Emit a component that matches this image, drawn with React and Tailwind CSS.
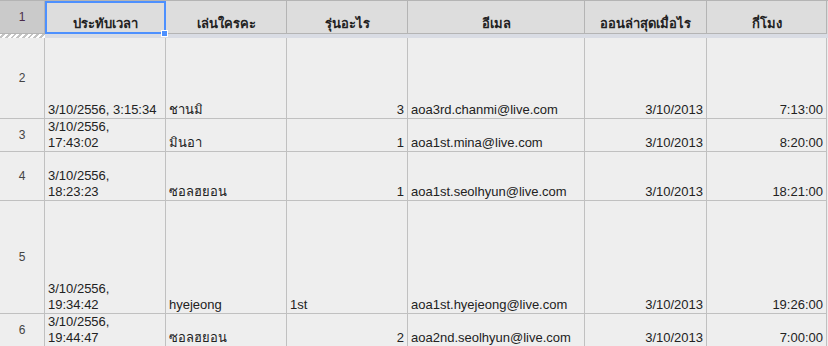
import React from "react";

const widths = ["w-[45px]", "w-[121px]", "w-[121px]", "w-[121px]", "w-[177px]", "w-[122px]", "w-[120px]"];
const headers = ["ประทับเวลา", "เล่นใครคะ", "รุ่นอะไร", "อีเมล", "ออนล่าสุดเมื่อไร", "กี่โมง"];

const rows = [
  { n: 2, h: "h-[81px]", cells: [["3/10/2556, 3:15:34"], "ชานมิ", "3", "aoa3rd.chanmi@live.com", "3/10/2013", "7:13:00"] },
  { n: 3, h: "h-[33px]", cells: [["3/10/2556,", "17:43:02"], "มินอา", "1", "aoa1st.mina@live.com", "3/10/2013", "8:20:00"] },
  { n: 4, h: "h-[49px]", cells: [["3/10/2556,", "18:23:23"], "ซอลฮยอน", "1", "aoa1st.seolhyun@live.com", "3/10/2013", "18:21:00"] },
  { n: 5, h: "h-[113px]", cells: [["3/10/2556,", "19:34:42"], "hyejeong", "1st", "aoa1st.hyejeong@live.com", "3/10/2013", "19:26:00"], left: true },
  { n: 6, h: "h-[33px]", cells: [["3/10/2556,", "19:44:47"], "ซอลฮยอน", "2", "aoa2nd.seolhyun@live.com", "3/10/2013", "7:00:00"] },
];

// columns holding numbers are right aligned
const rightCols = [2, 4, 5];

const Cell = ({ width, children, align }) => (
  <div
    className={`${width} shrink-0 h-full border-r border-b border-[#c0c0c0] px-[3px] flex flex-col justify-end leading-4 ${align === "right" ? "items-end" : "items-start"}`}
  >
    {children}
  </div>
);

export default function App() {
  return (
    <div className="relative w-[828px] h-[346px] overflow-hidden bg-[#eeeeee] font-['Liberation_Sans',Tahoma,sans-serif] text-[13px] text-[#222]">
      {/* header row */}
      <div className="flex h-[34px] border-t border-[#b4b4b4] bg-[#dddddd]">
        <div className="w-[45px] shrink-0 h-full border-r border-b border-[#b4b4b4] bg-[#cacaca] flex items-center justify-center text-[12px] text-[#4a2a4a]">
          1
        </div>
        {headers.map((t, i) => (
          <div
            key={i}
            className={`${widths[i + 1]} shrink-0 h-full border-r border-b border-[#b4b4b4] flex items-end justify-center pb-px font-bold leading-4`}
          >
            {t}
          </div>
        ))}
      </div>

      {/* frozen separator */}
      <div className="flex h-[4px]">
        <div className="w-[45px] shrink-0 h-full bg-[repeating-linear-gradient(135deg,#ffffff_0px,#ffffff_2px,#c4c4c4_2px,#c4c4c4_4px)]"></div>
        <div className="flex-1 h-full bg-[#d9dce4]"></div>
      </div>

      {rows.map((r) => (
        <div key={r.n} className={`flex ${r.h}`}>
          <div className="w-[45px] shrink-0 h-full border-r border-b border-[#c0c0c0] flex items-center justify-center text-[12px] text-[#444]">
            {r.n}
          </div>
          {r.cells.map((c, i) => {
            const align = rightCols.includes(i) && !(r.left && i === 2) ? "right" : "left";
            return (
              <Cell key={i} width={widths[i + 1]} align={align}>
                {Array.isArray(c) ? c.map((line, j) => <span key={j} className="whitespace-nowrap">{line}</span>) : <span className="whitespace-nowrap">{c}</span>}
              </Cell>
            );
          })}
        </div>
      ))}

      {/* selected cell A1 */}
      <div className="absolute left-[45px] top-[1px] w-[121px] h-[33px] border-2 border-[#4d90fe]"></div>
      <div className="absolute left-[161px] top-[30px] w-[7px] h-[7px] bg-[#4d90fe] border border-white"></div>
    </div>
  );
}
